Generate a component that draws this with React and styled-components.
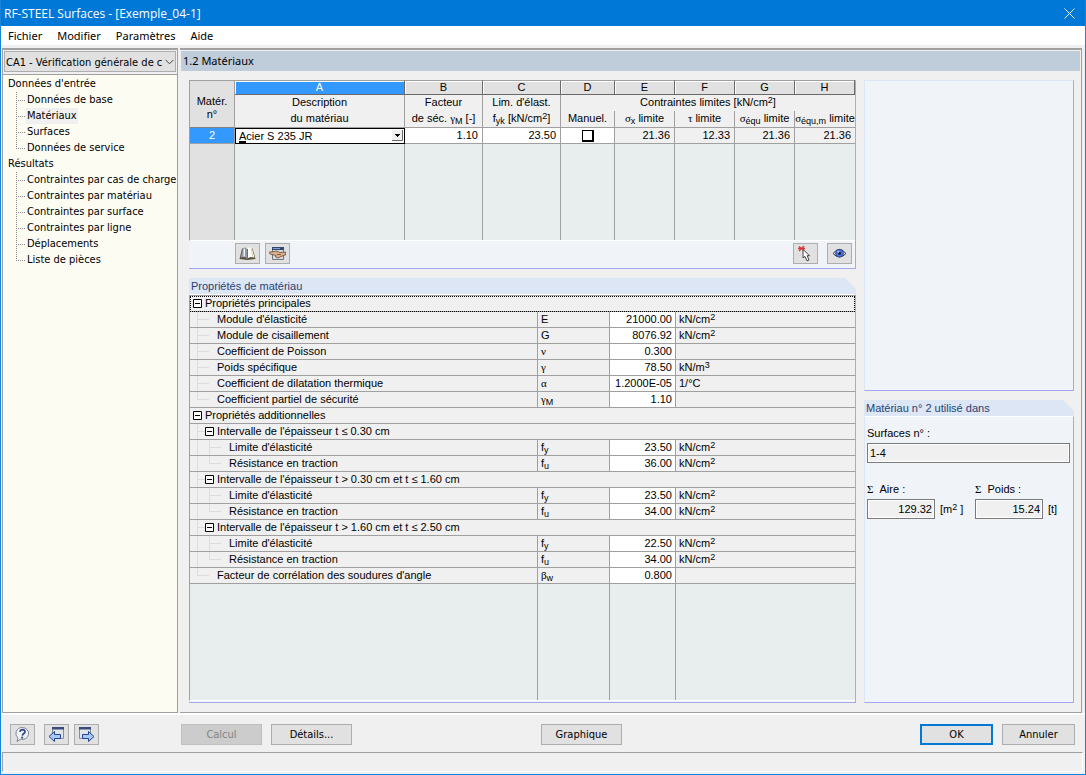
import React, { useState } from "react";
import styled, { createGlobalStyle, css } from "styled-components";

const UI_FONT = `"DejaVu Sans Condensed", "Noto Sans", sans-serif`;
const MENU_FONT = `"Noto Sans", sans-serif`;
const GRID_FONT = `"Liberation Sans", Arial, sans-serif`;

const navigation = [
  {
    title: "Données d'entrée",
    items: [
      "Données de base",
      "Matériaux",
      "Surfaces",
      "Données de service",
    ],
  },
  {
    title: "Résultats",
    items: [
      "Contraintes par cas de charge",
      "Contraintes par matériau",
      "Contraintes par surface",
      "Contraintes par ligne",
      "Déplacements",
      "Liste de pièces",
    ],
  },
];

const kNcm2 = (
  <>
    kN/cm<Sup>2</Sup>
  </>
);
const fy = (
  <>
    f<Sub>y</Sub>
  </>
);
const fu = (
  <>
    f<Sub>u</Sub>
  </>
);

const properties = [
  { level: 0, group: true, label: "Propriétés principales", focused: true },
  { level: 1, label: "Module d'élasticité", symbol: "E", value: "21000.00", unit: kNcm2 },
  { level: 1, label: "Module de cisaillement", symbol: "G", value: "8076.92", unit: kNcm2 },
  { level: 1, label: "Coefficient de Poisson", symbol: <Greek>ν</Greek>, value: "0.300" },
  {
    level: 1,
    label: "Poids spécifique",
    symbol: <Greek>γ</Greek>,
    value: "78.50",
    unit: (
      <>
        kN/m<Sup>3</Sup>
      </>
    ),
  },
  {
    level: 1,
    label: "Coefficient de dilatation thermique",
    symbol: <Greek>α</Greek>,
    value: "1.2000E-05",
    unit: "1/°C",
  },
  {
    level: 1,
    last: true,
    label: "Coefficient partiel de sécurité",
    symbol: (
      <>
        <Greek>γ</Greek>
        <Sub>M</Sub>
      </>
    ),
    value: "1.10",
  },
  { level: 0, group: true, label: "Propriétés additionnelles" },
  { level: 1, group: true, label: "Intervalle de l'épaisseur t ≤ 0.30 cm" },
  { level: 2, label: "Limite d'élasticité", symbol: fy, value: "23.50", unit: kNcm2 },
  { level: 2, last: true, label: "Résistance en traction", symbol: fu, value: "36.00", unit: kNcm2 },
  { level: 1, group: true, label: "Intervalle de l'épaisseur t > 0.30 cm et t ≤ 1.60 cm" },
  { level: 2, label: "Limite d'élasticité", symbol: fy, value: "23.50", unit: kNcm2 },
  { level: 2, last: true, label: "Résistance en traction", symbol: fu, value: "34.00", unit: kNcm2 },
  { level: 1, group: true, label: "Intervalle de l'épaisseur t > 1.60 cm et t ≤ 2.50 cm" },
  { level: 2, label: "Limite d'élasticité", symbol: fy, value: "22.50", unit: kNcm2 },
  { level: 2, last: true, label: "Résistance en traction", symbol: fu, value: "34.00", unit: kNcm2 },
  {
    level: 1,
    last: true,
    label: "Facteur de corrélation des soudures d'angle",
    symbol: (
      <>
        <Greek>β</Greek>
        <Sub>w</Sub>
      </>
    ),
    value: "0.800",
  },
];

const App = () => {
  const [page, setPage] = useState("Matériaux");
  const [manual, setManual] = useState(false);

  return (
    <Window>
      <GlobalStyle />
      <TitleBar>
        <Title>RF-STEEL Surfaces - [Exemple_04-1]</Title>
        <CloseBtn aria-label="Fermer">
          <svg width="11" height="11" viewBox="0 0 11 11">
            <path d="M0.5 0.5L10.5 10.5M10.5 0.5L0.5 10.5" stroke="#fff" fill="none" />
          </svg>
        </CloseBtn>
      </TitleBar>
      <MenuBar>
        <MenuBtn>Fichier</MenuBtn>
        <MenuBtn>Modifier</MenuBtn>
        <MenuBtn>Paramètres</MenuBtn>
        <MenuBtn>Aide</MenuBtn>
      </MenuBar>

      <Body>
        <Sidebar>
          <CaseBox>
            <CaseSelect aria-label="Cas">
              <option>CA1 - Vérification générale de c</option>
            </CaseSelect>
            <ChevronIcon />
          </CaseBox>
          <Tree>
            {navigation.map((section) => (
              <li key={section.title}>
                <TreeTitle>{section.title}</TreeTitle>
                <TreeList>
                  {section.items.map((item) => (
                    <TreeItem key={item}>
                      <TreeBtn $active={item === page} onClick={() => setPage(item)}>
                        {item}
                      </TreeBtn>
                    </TreeItem>
                  ))}
                </TreeList>
              </li>
            ))}
          </Tree>
        </Sidebar>

        <Main>
          <PageTitle>1.2 Matériaux</PageTitle>
          <Content>
            <LeftColumn>
              <MaterialPanel>
                <MaterialTable>
                  <colgroup>
                    <Col $w={45} />
                    <col />
                    <Col $w={78} />
                    <Col $w={78} />
                    <Col $w={54} />
                    <Col $w={60} />
                    <Col $w={60} />
                    <Col $w={60} />
                    <Col $w={60} />
                  </colgroup>
                  <thead>
                    <tr>
                      <CornerCell rowSpan={3}>
                        Matér.
                        <br />
                        n°
                      </CornerCell>
                      {"ABCDEFGH".split("").map((letter) => (
                        <LetterCell key={letter} $active={letter === "A"}>
                          {letter}
                        </LetterCell>
                      ))}
                    </tr>
                    <tr>
                      <HeadCell>Description</HeadCell>
                      <HeadCell>Facteur</HeadCell>
                      <HeadCell>Lim. d'élast.</HeadCell>
                      <HeadCell colSpan={5} $open>
                        Contraintes limites [kN/cm<Sup>2</Sup>]
                      </HeadCell>
                    </tr>
                    <tr>
                      <SubHeadCell>du matériau</SubHeadCell>
                      <SubHeadCell>
                        de séc. <Greek>γ</Greek>
                        <Sub>M</Sub> [-]
                      </SubHeadCell>
                      <SubHeadCell>
                        f<Sub>yk</Sub> [kN/cm<Sup>2</Sup>]
                      </SubHeadCell>
                      <SubHeadCell>Manuel.</SubHeadCell>
                      <SubHeadCell>
                        <Greek>σ</Greek>
                        <Sub>x</Sub> limite
                      </SubHeadCell>
                      <SubHeadCell>
                        <Greek>τ</Greek> limite
                      </SubHeadCell>
                      <SubHeadCell>
                        <Greek>σ</Greek>
                        <Sub>équ</Sub> limite
                      </SubHeadCell>
                      <SubHeadCell $last>
                        <Greek>σ</Greek>
                        <Sub>équ,m</Sub> limite
                      </SubHeadCell>
                    </tr>
                  </thead>
                  <tbody>
                    <tr>
                      <RowNumber>2</RowNumber>
                      <EditCell>
                        <MaterialBox>
                          <MaterialSelect aria-label="Description du matériau">
                            <option>Acier S 235 JR</option>
                          </MaterialSelect>
                          <Caret />
                          <DropIcon />
                        </MaterialBox>
                      </EditCell>
                      <DataCell $editable>1.10</DataCell>
                      <DataCell $editable>23.50</DataCell>
                      <DataCell $editable $center>
                        <CheckBox
                          type="checkbox"
                          aria-label="Manuel."
                          checked={manual}
                          onChange={() => setManual(!manual)}
                        />
                      </DataCell>
                      <DataCell>21.36</DataCell>
                      <DataCell>12.33</DataCell>
                      <DataCell>21.36</DataCell>
                      <DataCell $last>21.36</DataCell>
                    </tr>
                    <tr>
                      <EmptyCell $head />
                      <EmptyCell />
                      <EmptyCell />
                      <EmptyCell />
                      <EmptyCell />
                      <EmptyCell />
                      <EmptyCell />
                      <EmptyCell />
                      <EmptyCell $last />
                    </tr>
                  </tbody>
                </MaterialTable>
                <Toolbar>
                  <IconBtn aria-label="Bibliothèque de matériaux">
                    <BookIcon />
                  </IconBtn>
                  <IconBtn aria-label="Importer le matériau">
                    <HandIcon />
                  </IconBtn>
                  <Spacer />
                  <IconBtn aria-label="Sélectionner">
                    <PickIcon />
                  </IconBtn>
                  <EyeBtn aria-label="Mode de visualisation">
                    <EyeIcon />
                  </EyeBtn>
                </Toolbar>
              </MaterialPanel>

              <Group>
                <GroupTitle>Propriétés de matériau</GroupTitle>
                <PropertyFrame>
                  <PropertyTable>
                    <colgroup>
                      <col />
                      <Col $w={72} />
                      <Col $w={66} />
                      <Col $w={179} />
                    </colgroup>
                    <tbody>
                      {properties.map((row, i) => (
                        <PropertyRow key={i} {...row} />
                      ))}
                    </tbody>
                  </PropertyTable>
                  <PropertyFiller>
                    <span />
                    <span />
                    <span />
                    <span />
                  </PropertyFiller>
                </PropertyFrame>
              </Group>
            </LeftColumn>

            <RightColumn>
              <Preview />
              <Group>
                <GroupTitle>Matériau n° 2 utilisé dans</GroupTitle>
                <UsageBody>
                  <FieldLabel htmlFor="surfaces">Surfaces n° :</FieldLabel>
                  <Field id="surfaces" readOnly value="1-4" />
                  <Totals>
                    <Total>
                      <FieldLabel htmlFor="aire">
                        <Greek>Σ</Greek>&nbsp; Aire :
                      </FieldLabel>
                      <TotalRow>
                        <Field id="aire" readOnly value="129.32" $number />
                        <span>
                          [m<Sup>2</Sup> ]
                        </span>
                      </TotalRow>
                    </Total>
                    <Total>
                      <FieldLabel htmlFor="poids">
                        <Greek>Σ</Greek>&nbsp; Poids :
                      </FieldLabel>
                      <TotalRow>
                        <Field id="poids" readOnly value="15.24" $number />
                        <span>[t]</span>
                      </TotalRow>
                    </Total>
                  </Totals>
                </UsageBody>
              </Group>
            </RightColumn>
          </Content>
        </Main>
      </Body>

      <Footer>
        <FooterTools>
          <IconBtn aria-label="Aide">
            <HelpIcon />
          </IconBtn>
          <NavBtns>
            <IconBtn aria-label="Page précédente">
              <PageIcon />
            </IconBtn>
            <IconBtn aria-label="Page suivante">
              <PageIcon next />
            </IconBtn>
          </NavBtns>
        </FooterTools>
        <FooterActions>
          <Button disabled>Calcul</Button>
          <Button>Détails...</Button>
        </FooterActions>
        <Button>Graphique</Button>
        <DialogActions>
          <Button $small $primary>
            OK
          </Button>
          <Button $small>Annuler</Button>
        </DialogActions>
      </Footer>
      <StatusBar />
    </Window>
  );
};

const PropertyRow = ({ level, group, last, focused, label, symbol, value, unit }) => (
  <tr>
    <NameCell colSpan={group ? 4 : 1} $group={group} $focused={focused}>
      <Name>
        {level === 2 && <Guide />}
        {level === 1 && group && <Guide $branch />}
        {!group && <Guide $branch $leaf $last={last} />}
        {group && (
          <Toggle aria-label={`Réduire ${label}`}>
            <svg width="9" height="9" viewBox="0 0 9 9">
              <path d="M0.5 0.5h8v8h-8z" fill="#fff" stroke="#000" />
              <path d="M2 4.5h5" stroke="#000" />
            </svg>
          </Toggle>
        )}
        {label}
      </Name>
    </NameCell>
    {!group && (
      <>
        <SymbolCell>{symbol}</SymbolCell>
        <ValueCell>{value}</ValueCell>
        <UnitCell>{unit}</UnitCell>
      </>
    )}
  </tr>
);

const ChevronIcon = () => (
  <Chevron width="9" height="6" viewBox="0 0 9 6">
    <path d="M0.5 0.8L4.5 4.8L8.5 0.8" fill="none" stroke="#444" />
  </Chevron>
);

const DropIcon = () => (
  <Drop width="11" height="11" viewBox="0 0 11 11">
    <path d="M0 0h11v11h-11z" fill="#f0f0f0" />
    <path d="M10.5 0v10.5h-10.5" fill="none" stroke="#696969" />
    <path d="M3 4h5v1h-1v1h-1v1h-1v-1h-1v-1h-1z" fill="#000" />
  </Drop>
);

const BookIcon = () => (
  <svg width="17" height="15" viewBox="0 0 17 15">
    <path d="M0.5 13L3 2.5L8 3L13.5 2.5L16.5 13L8.5 14z" fill="#57503f" />
    <path d="M1.5 11.5L4 2L6.5 1.5L8 3V12.5L5.5 11z" fill="#8f98a6" />
    <path d="M4.5 10.5V3L6 2.5V10.5z" fill="#eef0f3" />
    <path d="M8 3L10 1.5L13 2.5L15.5 11.5L11.5 11L8 12.5z" fill="#fffef6" />
    <path d="M8.5 3V12" stroke="#6b6f78" fill="none" />
    <path d="M12 3L14 11" stroke="#d8d0aa" fill="none" />
  </svg>
);

const HandIcon = () => (
  <svg width="17" height="15" viewBox="0 0 17 15">
    <path d="M3.5 1.5h11v12h-11z" fill="#d9dde3" stroke="#70767c" />
    <path d="M3 1h12v3h-12z" fill="#34476e" />
    <path d="M4 2h7v1h-7z" fill="#7fa2d4" />
    <path d="M0.5 6L5 5.5L8 5L11 6.5L16.5 6V9L12 10.5L9 12L6.5 11L7 9.5L1 8z" fill="#d9b08c" stroke="#6d4937" strokeWidth="0.8" />
    <path d="M8 8.5H12" stroke="#6d4937" strokeWidth="0.8" fill="none" />
  </svg>
);

const PickIcon = () => (
  <svg width="17" height="17" viewBox="0 0 17 17">
    <path d="M2 1.5L7 5.5M7 1L2 6M1 3.5H8" stroke="#d23b3b" strokeWidth="1.4" fill="none" />
    <path d="M6 4.5V13L8 11.4L10 15.8L12 15L10.2 10.7H12.6z" fill="#fff" stroke="#444" />
  </svg>
);

const EyeIcon = () => (
  <svg width="15" height="13" viewBox="0 0 15 13">
    <path d="M1 6.5Q7.5 -1.5 14 6.5Q7.5 13.5 1 6.5z" fill="#dfe5f4" stroke="#33374a" />
    <circle cx="7.5" cy="6.2" r="3.9" fill="#4f74dc" stroke="#263a80" strokeWidth="0.8" />
    <circle cx="7.5" cy="6.2" r="1.5" fill="#10183a" />
    <circle cx="6.3" cy="4.8" r="1" fill="#c6d6ff" />
  </svg>
);

const HelpIcon = () => (
  <svg width="17" height="17" viewBox="0 0 17 17">
    <path d="M8.5 1.5a6.5 6 0 1 1-2 11.8L3 15.5L4 12A6.3 6 0 0 1 8.5 1.5z" fill="#f4f5f8" stroke="#7f858e" />
    <path d="M6 5.8Q6.2 3.7 8.6 3.7Q11.2 3.8 10.9 6Q10.6 7.2 9.2 8Q8.5 8.5 8.4 9.6" fill="none" stroke="#33488c" strokeWidth="1.8" />
    <circle cx="8.2" cy="11.6" r="1.1" fill="#33488c" />
  </svg>
);

const PageIcon = ({ next }) => (
  <svg width="17" height="17" viewBox="0 0 17 17">
    <path
      d={next ? "M1.5 1.5h11v11h-11z" : "M4.5 1.5h11v11h-11z"}
      fill="#e2e4e8"
      stroke="#8a8d93"
    />
    <path d={next ? "M1 1h12v2.5h-12z" : "M4 1h12v2.5h-12z"} fill="#3b4a7c" />
    <path
      d={
        next
          ? "M4.5 8.5H10.5V5.5L16 10.5L10.5 15.5V12.5H4.5z"
          : "M12.5 8.5H6.5V5.5L1 10.5L6.5 15.5V12.5H12.5z"
      }
      fill="#a9c8f5"
      stroke="#1f4594"
    />
  </svg>
);

export default App;

const GlobalStyle = createGlobalStyle`
  * {
    box-sizing: border-box;
  }

  body {
    margin: 0;
    font-family: ${UI_FONT};
    font-size: 11px;
    color: #000;
  }

  button, input, select {
    margin: 0;
    padding: 0;
    font: inherit;
    color: inherit;
  }
`;

const Window = styled.div`
  min-height: 100vh;
  display: flex;
  flex-direction: column;
  background: #f0f0f0;
  border: 1px solid #1883d7;
  border-top: 0;
`;

const TitleBar = styled.header`
  height: 26px;
  display: flex;
  align-items: center;
  justify-content: space-between;
  padding: 0 10px 0 3px;
  background: #0078d7;
  color: #fff;
`;

const Title = styled.h1`
  margin: 0;
  font-family: "Open Sans", sans-serif;
  font-size: 12px;
  font-weight: normal;
`;

const CloseBtn = styled.button`
  display: flex;
  border: 0;
  background: none;
`;

const MenuBar = styled.nav`
  height: 19px;
  display: flex;
  gap: 15px;
  padding: 0 7px;
  background: #fff;
`;

const MenuBtn = styled.button`
  border: 0;
  background: none;
  font-family: ${MENU_FONT};
  line-height: 19px;
`;

const Body = styled.div`
  flex: 1;
  display: flex;
  gap: 2px;
  margin-top: 3px;
  padding: 0 3px 0 1px;
`;

const Sidebar = styled.aside`
  width: 176px;
  display: flex;
  flex-direction: column;
  border: 1px solid #a0a0a0;
  border-top-width: 2px;
`;

const CaseBox = styled.div`
  position: relative;
  height: 21px;
  margin: 1px;
`;

const CaseSelect = styled.select`
  appearance: none;
  width: 100%;
  height: 21px;
  padding: 1px 12px 0 1px;
  background: #e1e1e1;
  border: 1px solid #adadad;
  border-radius: 0;
`;

const Chevron = styled.svg`
  position: absolute;
  right: 2px;
  top: 8px;
  pointer-events: none;
`;

const Tree = styled.ul`
  flex: 1;
  margin: 1px 0 0;
  padding: 1px 0 0 5px;
  list-style: none;
  background: #fcfcf3;
  border-top: 1px solid #a0a0a0;
`;

const TreeTitle = styled.div`
  line-height: 16px;
`;

const TreeList = styled.ul`
  margin: 0;
  padding: 0 0 0 8px;
  list-style: none;
`;

const TreeItem = styled.li`
  height: 16px;
  padding-left: 10px;
  background:
    repeating-linear-gradient(to right, #888 0 1px, transparent 1px 2px) 0 8px / 9px 1px no-repeat,
    repeating-linear-gradient(to bottom, #888 0 1px, transparent 1px 2px) 0 0 / 1px 16px no-repeat;

  &:last-child {
    background-size: 9px 1px, 1px 8px;
  }
`;

const TreeBtn = styled.button`
  padding: 0 1px;
  border: 0;
  background: ${({ $active }) => ($active ? "#f0f0f0" : "none")};
  line-height: 16px;
  white-space: nowrap;
`;

const Main = styled.main`
  flex: 1;
  min-width: 0;
  display: flex;
  flex-direction: column;
  border: 1px solid #a0a0a0;
  border-width: 2px 1px 1px 0;
`;

const PageTitle = styled.h2`
  margin: 1px 1px 0;
  padding: 0 2px;
  background: #bfccda;
  font-family: ${MENU_FONT};
  font-size: 11px;
  font-weight: normal;
  line-height: 20px;
`;

const Content = styled.div`
  flex: 1;
  display: flex;
  gap: 8px;
  padding: 9px 7px 9px 9px;
  font-family: ${GRID_FONT};
`;

const LeftColumn = styled.div`
  flex: 1;
  min-width: 0;
  display: flex;
  flex-direction: column;
  gap: 9px;
`;

const RightColumn = styled.div`
  width: 210px;
  display: flex;
  flex-direction: column;
  gap: 9px;
`;

const panel = css`
  background: #f0f4f9;
  border-right: 1px solid #a6a6ec;
  border-bottom: 1px solid #a6a6ec;
`;

const MaterialPanel = styled.section`
  ${panel}
`;

const MaterialTable = styled.table`
  width: 100%;
  table-layout: fixed;
  border-collapse: separate;
  border-spacing: 0;
  border-left: 1px solid #a0a0a0;
  border-bottom: 1px solid #fff;
`;

const Col = styled.col`
  width: ${({ $w }) => $w}px;
`;

const cell = css`
  padding: 0;
  font-weight: normal;
  white-space: nowrap;
  line-height: 15px;
  border-right: ${({ $last }) => ($last ? 0 : "1px solid #a0a0a0")};
`;

const CornerCell = styled.th`
  ${cell}
  background: #e1e1e1;
  border-top: 1px solid #a0a0a0;
  border-bottom: 1px solid #808080;
  line-height: 13px;
  vertical-align: middle;
  padding-top: 8px;
`;

const LetterCell = styled.th`
  ${cell}
  height: 15px;
  line-height: 13px;
  color: ${({ $active }) => ($active ? "#fff" : "#000")};
  background: ${({ $active }) => ($active ? "#3399ff" : "#e1e1e1")};
  border-top: 1px solid #a0a0a0;
  border-right: 1px solid #696969;
  border-bottom: 1px solid #696969;
  box-shadow: inset 1px 1px #fff;
`;

const HeadCell = styled.th`
  ${cell}
  height: 16px;
  vertical-align: top;
  background: #f0f0f0;
  ${({ $open }) => $open && "border-right: 0;"}
`;

const SubHeadCell = styled.th`
  ${cell}
  height: 17px;
  vertical-align: top;
  background: #f0f0f0;
  border-bottom: 1px solid #a0a0a0;
`;

const RowNumber = styled.th`
  ${cell}
  color: #fff;
  background: #3399ff;
  border-bottom: 1px solid #a0a0a0;
`;

const DataCell = styled.td`
  ${cell}
  height: 16px;
  padding-right: ${({ $center }) => ($center ? 0 : 4)}px;
  text-align: ${({ $center }) => ($center ? "center" : "right")};
  background: ${({ $editable }) => ($editable ? "#fff" : "#f0f0f0")};
  border-bottom: 1px solid #a0a0a0;
`;

const EditCell = styled.td`
  padding: 0;
`;

const MaterialBox = styled.div`
  position: relative;
  height: 16px;
`;

const MaterialSelect = styled.select`
  appearance: none;
  display: block;
  width: 100%;
  height: 16px;
  padding: 0 16px 0 3px;
  background: #fff;
  border: 1px solid #000;
  border-radius: 0;
`;

const Caret = styled.span`
  position: absolute;
  left: 4px;
  bottom: 1px;
  width: 7px;
  height: 2px;
  background: #000;
`;

const Drop = styled.svg`
  position: absolute;
  right: 2px;
  top: 2px;
  pointer-events: none;
`;

const CheckBox = styled.input`
  appearance: none;
  display: block;
  width: 12px;
  height: 12px;
  margin: 0 auto;
  background: #fff;
  border: 1px solid #000;
  border-width: 1px 2px 2px 1px;

  &:checked {
    background: #000;
  }
`;

const EmptyCell = styled.td`
  ${cell}
  height: 96px;
  background: ${({ $head }) => ($head ? "#e1e1e1" : "#e8eeee")};
`;

const Toolbar = styled.div`
  display: flex;
  gap: 5px;
  padding: 2px 3px 4px 46px;
`;

const Spacer = styled.div`
  flex: 1;
`;

const IconBtn = styled.button`
  width: 25px;
  height: 21px;
  display: flex;
  align-items: center;
  justify-content: center;
  background: #e1e1e1;
  border: 1px solid #adadad;
`;

const EyeBtn = styled(IconBtn)`
  margin-left: 4px;
`;

const Group = styled.section`
  flex: 1;
  display: flex;
  flex-direction: column;
`;

// the right corner is cut at 45 degrees
const GroupTitle = styled.h3`
  margin: 0;
  padding: 0 2px;
  height: 16px;
  line-height: 16px;
  font-size: 11px;
  font-weight: normal;
  color: #1f4377;
  background: #dce6f4;
  clip-path: polygon(0 0, calc(100% - 11px) 0, 100% 11px, 100% 100%, 0 100%);
`;

const PropertyFrame = styled.div`
  ${panel}
  flex: 1;
  display: flex;
  flex-direction: column;
  padding-bottom: 1px;
  border-top: 1px solid #fff;
`;

const PropertyTable = styled.table`
  width: 100%;
  table-layout: fixed;
  border-collapse: separate;
  border-spacing: 0;
  border-left: 1px solid #a0a0a0;
  border-top: 1px solid #a0a0a0;
`;

const propertyCell = css`
  height: 16px;
  padding: 0 3px;
  line-height: 15px;
  white-space: nowrap;
  background: #f0f0f0;
  border-bottom: 1px solid #a0a0a0;
  border-right: 1px solid #a0a0a0;
`;

const NameCell = styled.td`
  ${propertyCell}
  ${({ $group }) => $group && "border-right: 0;"}
  ${({ $focused }) =>
    $focused &&
    css`
      outline: 1px dotted #000;
      outline-offset: -1px;
    `}
`;

const Name = styled.div`
  display: flex;
  align-items: center;
  height: 15px;
`;

const Guide = styled.span`
  flex: none;
  width: ${({ $leaf }) => ($leaf ? 24 : 12)}px;
  height: 15px;
  background:
    linear-gradient(#dcdcdc, #dcdcdc) 4px 7px / ${({ $branch }) => ($branch ? 12 : 0)}px 1px no-repeat,
    linear-gradient(#dcdcdc, #dcdcdc) 4px 0 / 1px ${({ $last }) => ($last ? 8 : 15)}px no-repeat;
`;

const Toggle = styled.button`
  flex: none;
  display: flex;
  width: 12px;
  border: 0;
  background: none;
`;

const SymbolCell = styled.td`
  ${propertyCell}
`;

const ValueCell = styled.td`
  ${propertyCell}
  text-align: right;
  background: #fff;
`;

const UnitCell = styled.td`
  ${propertyCell}
  border-right: 0;
`;

const PropertyFiller = styled.div`
  flex: 1;
  display: grid;
  grid-template-columns: 1fr 72px 66px 179px;
  background: #e8eeee;
  border-left: 1px solid #a0a0a0;
  border-bottom: 1px solid #fff;

  span:not(:last-child) {
    border-right: 1px solid #a0a0a0;
  }
`;

const Preview = styled.section`
  ${panel}
  height: 311px;
  border-top: 1px solid #dce6f4;
  border-left: 1px solid #dce6f4;
`;

const UsageBody = styled.div`
  ${panel}
  flex: 1;
  padding: 8px 3px 0 2px;
  border-top: 1px solid #fff;
  border-left: 1px solid #dce6f4;
`;

const FieldLabel = styled.label`
  display: block;
  height: 18px;
  line-height: 16px;
`;

const Field = styled.input`
  display: block;
  width: ${({ $number }) => ($number ? "68px" : "100%")};
  height: 20px;
  padding: 0 2px;
  text-align: ${({ $number }) => ($number ? "right" : "left")};
  background: #f0f0f0;
  border: 1px solid #7a7a7a;
  box-shadow: inset 0 0 0 1px #fff;
  outline: 0;
`;

const Totals = styled.div`
  display: flex;
  gap: 8px;
  margin-top: 18px;
`;

const Total = styled.div`
  flex: none;
  width: 100px;
`;

const TotalRow = styled.div`
  display: flex;
  align-items: center;
  gap: 5px;
  white-space: nowrap;
`;

const Footer = styled.footer`
  display: flex;
  height: 39px;
  padding: 9px 10px 0 9px;
  border-top: 2px solid #fff;
`;

const FooterTools = styled.div`
  width: 171px;
  display: flex;
  gap: 9px;
`;

const NavBtns = styled.div`
  display: flex;
  gap: 5px;
`;

const FooterActions = styled.div`
  width: 360px;
  display: flex;
  gap: 9px;
`;

const DialogActions = styled.div`
  display: flex;
  gap: 9px;
  margin-left: auto;
`;

const Button = styled.button`
  width: ${({ $small }) => ($small ? 73 : 81)}px;
  height: 21px;
  background: #e1e1e1;
  border: ${({ $primary }) => ($primary ? "2px solid #0078d7" : "1px solid #adadad")};

  &:disabled {
    color: #838383;
    background: #cccccc;
    border-color: #bfbfbf;
  }
`;

const StatusBar = styled.div`
  height: 20px;
  margin: 0 2px 2px 1px;
  border: 1px solid #a0a0a0;
  border-right-color: #fff;
  border-bottom-color: #fff;
`;

// function components, so the row data above can use them
function Sup({ children }) {
  return <Raised>{children}</Raised>;
}

function Sub({ children }) {
  return <Lowered>{children}</Lowered>;
}

function Greek({ children }) {
  return <GreekText>{children}</GreekText>;
}

const Raised = styled.sup`
  font-size: 9px;
  line-height: 0;
  vertical-align: 3px;
`;

const Lowered = styled.sub`
  font-size: 9px;
  line-height: 0;
  vertical-align: -2px;
`;

const GreekText = styled.span`
  font-family: "Liberation Serif", serif;
  line-height: 0;
`;
